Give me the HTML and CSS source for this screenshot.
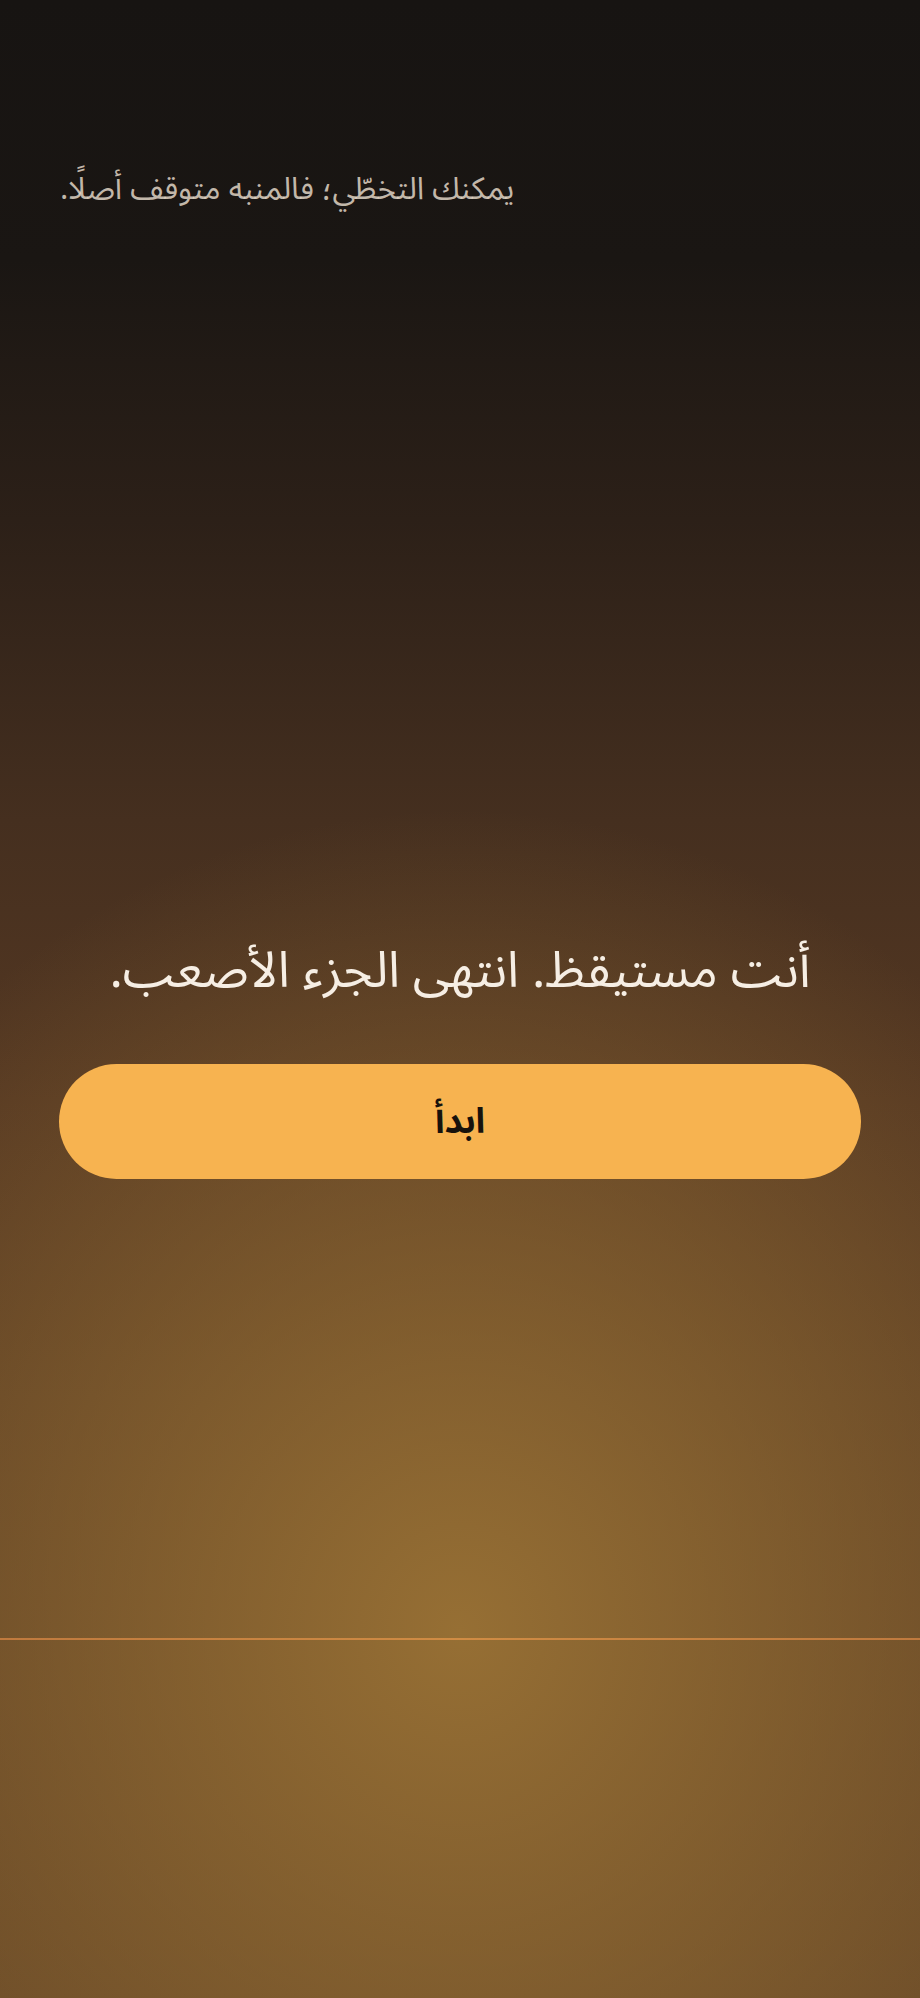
FILE: index.html
```html
<!DOCTYPE html>
<html lang="ar" dir="rtl">
<head>
<meta charset="utf-8">
<title>Wake</title>
<link rel="stylesheet" href="styles.css">
</head>
<body>
<main class="screen">
  <p class="skip">يمكنك التخطّي؛ فالمنبه متوقف أصلًا.</p>
  <h1 class="title">أنت مستيقظ. انتهى الجزء الأصعب.</h1>
  <button class="start" type="button">ابدأ</button>
  <div class="horizon"></div>
</main>
</body>
</html>
```

FILE: styles.css
```css
html, body {
  margin: 0;
  padding: 0;
}
body {
  width: 920px;
  height: 1998px;
  overflow: hidden;
  font-family: "Noto Sans Arabic", "Noto Sans", "DejaVu Sans", sans-serif;
  background:
    radial-gradient(ellipse 760px 820px at 50% 1630px, rgba(150, 111, 52, 1) 0%, rgba(150, 111, 52, 0.55) 45%, rgba(150, 111, 52, 0) 100%),
    linear-gradient(to bottom, #171412 0px, #1a1613 260px, #2c2018 520px, #452f1f 820px, #553822 1100px, #5d3f24 1400px, #664727 1998px);
}
.screen {
  display: flex;
  flex-direction: column;
  align-items: stretch;
  height: 1998px;
}
.skip {
  margin: 168px 0 0 0;
  padding: 0 60px;
  text-align: left;
  font-size: 31px;
  line-height: 42px;
  color: rgba(226, 214, 198, 0.85);
}
.title {
  margin: 729px 0 0 0;
  padding: 0 30px;
  text-align: center;
  font-weight: 400;
  font-size: 50px;
  line-height: 64px;
  color: #f6eee4;
}
.start {
  margin: 61px 59px 0 59px;
  height: 115px;
  border: none;
  border-radius: 58px;
  background: #f7b350;
  color: #17120c;
  font-family: inherit;
  font-weight: 700;
  font-size: 35px;
}
.horizon {
  margin-top: 459px;
  height: 2px;
  background: linear-gradient(to right, #c07a3e, #d08c44 50%, #c07a3e);
}
```
